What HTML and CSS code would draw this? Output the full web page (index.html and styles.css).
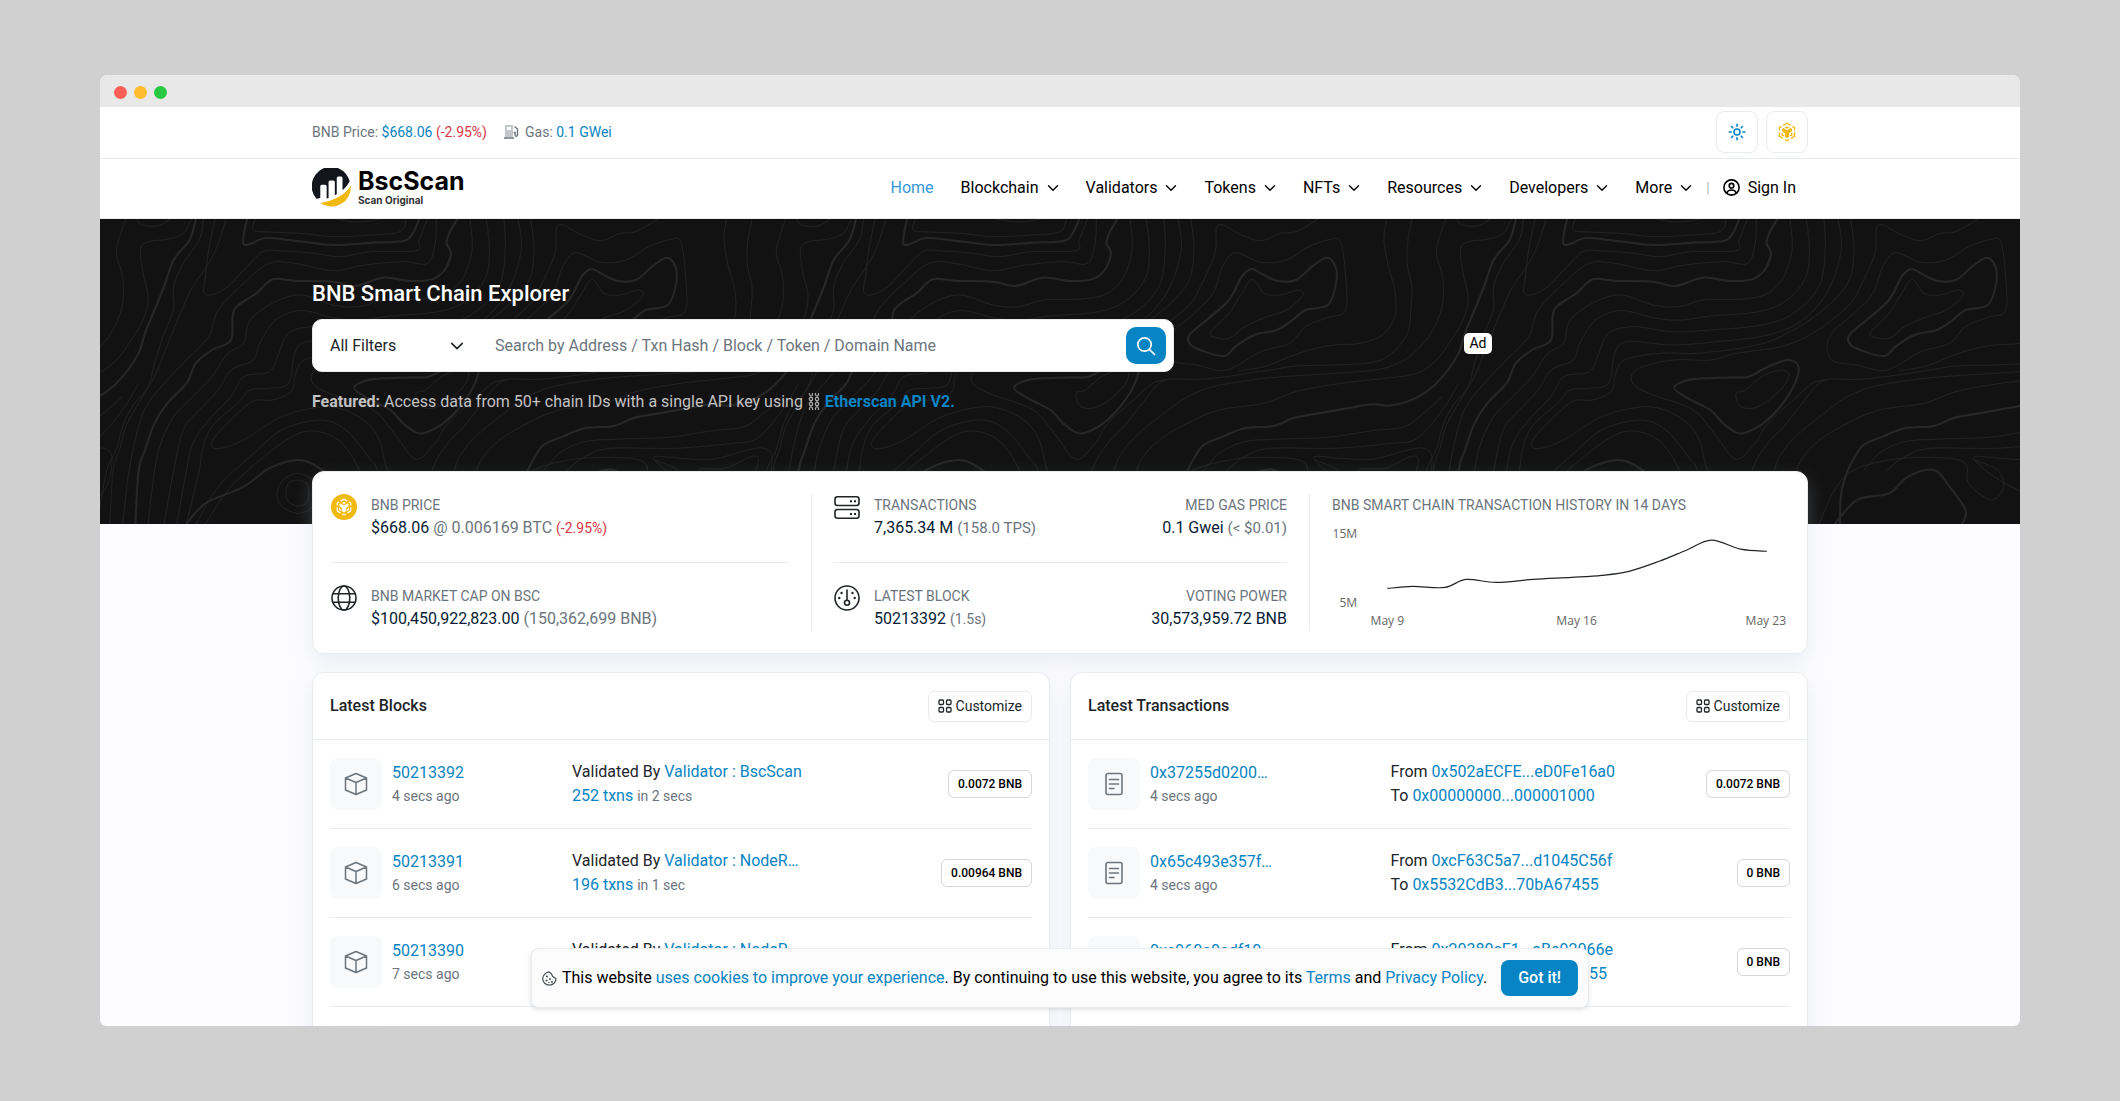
FILE: index.html
```html
<!DOCTYPE html>
<html lang="en">
<head>
  <meta charset="UTF-8" />
  <meta name="viewport" content="width=device-width, initial-scale=1.0" />
  <title>BNB Smart Chain Explorer</title>
  <link rel="stylesheet" href="styles.css">
</head>
<body>
  <svg class="sprite" aria-hidden="true">
    <symbol id="chevron" viewBox="0 0 12 12"><path d="M1.5 3.700 6 8.200l4.500-4.500" fill="none" stroke="currentColor" stroke-width="1.4" stroke-linecap="round" stroke-linejoin="round"/></symbol>
    <symbol id="bnb" viewBox="0 0 24 24">
      <g fill="none" stroke="currentColor" stroke-width="1.7">
        <path d="M7.500 4.100 12 1.500l4.500 2.600M18.500 5.300l2.500 1.400v3.300M21 12.300v5l-4.300 2.500M14.500 21 12 22.500 9.500 21M7.300 19.800 3 17.300v-5M3 10V6.700l2.500-1.400"/>
        <path d="M6.300 13.300v2.300l2 1.200M17.700 13.300v2.300l-2 1.200"/>
      </g>
      <path fill="currentColor" d="M9.300 6.500 12 5l2.700 1.500L12 8.100zM6 8.300l1.700-1L12 9.900l4.300-2.600 1.700 1v2.800l-3.400 2.100v4.500L12 19.300l-2.600-1.600v-4.500L6 11.100z"/>
    </symbol>
    <symbol id="grid" viewBox="0 0 14 14"><g fill="none" stroke="currentColor" stroke-width="1.3"><rect x="1" y="1" width="4.500" height="4.500" rx="1"/><rect x="8.500" y="1" width="4.500" height="4.500" rx="1"/><rect x="1" y="8.500" width="4.500" height="4.500" rx="1"/><rect x="8.500" y="8.500" width="4.500" height="4.500" rx="1"/></g></symbol>
    <symbol id="cube" viewBox="0 0 24 24"><path d="M12 1.500 22.500 6v12L12 22.500 1.500 18V6zM1.500 6 12 10.500 22.500 6M12 10.500v12" fill="none" stroke="currentColor" stroke-width="1.5" stroke-linejoin="round"/></symbol>
    <symbol id="doc" viewBox="0 0 24 24"><path d="M6 1.500h12a2 2 0 0 1 2 2v17a2 2 0 0 1-2 2H6a2 2 0 0 1-2-2v-17a2 2 0 0 1 2-2zM7.500 7.500h9M7.500 12h9M7.500 16.500h4.500" fill="none" stroke="currentColor" stroke-width="1.6" stroke-linecap="round"/></symbol>
  </svg>

  <div class="window">
    <div class="titlebar"><span class="dot red"></span><span class="dot yellow"></span><span class="dot green"></span></div>

    <div class="topbar">
      <div class="container topbar-inner">
        <div class="ticker">
          <span>BNB Price: <a href="#">$668.06</a> <span class="down">(-2.95%)</span></span>
          <span class="gas">
            <svg width="15" height="15" viewBox="0 0 15 15"><rect x="1" y="1" width="8" height="12" fill="#c3c7cb"/><rect x="3" y="3" width="4" height="3" fill="#fff"/><path d="M0 14h10M10.500 2.500 13.500 5v6a1.200 1.200 0 0 1-2.400 0V8.500H9.500" fill="none" stroke="#6c757d" stroke-width="1.4"/></svg>
            <span>Gas: <a href="#">0.1 GWei</a></span>
          </span>
        </div>
        <div class="tools">
          <button class="tool sun" type="button" aria-label="Theme"><svg width="18" height="18" viewBox="0 0 18 18" fill="none" stroke="currentColor" stroke-width="1.6" stroke-linecap="round"><circle cx="9" cy="9" r="3"/><path d="M9 1.200v2M9 14.800v2M1.200 9h2M14.800 9h2M3.500 3.500l1.300 1.300M13.200 13.200l1.300 1.300M3.500 14.500l1.300-1.300M13.200 4.800l1.300-1.300"/></svg></button>
          <button class="tool chain" type="button" aria-label="Network"><svg width="20" height="20"><use href="#bnb"/></svg></button>
        </div>
      </div>
    </div>

    <header class="header">
      <div class="container header-inner">
        <a class="logo" href="#">
          <svg width="39" height="39" viewBox="0 0 40 40">
            <path d="M4.600 31.600A19.800 19.800 0 1 1 38.700 13.700C36 18.500 33.800 20.700 31.300 22.700V10.300a2 2 0 0 0-2-1.500h-2.400a2 2 0 0 0-1.500 1.500v16.500l-2 1.100V14.200a2 2 0 0 0-2-1.500H19a2 2 0 0 0-2 1.500v16.500l-2 .6V18.600a2 2 0 0 0-2-1.500h-2.500a2 2 0 0 0-2 1.500v12c-1.500.6-2.700.9-3.900 1z" fill="#12161c"/>
            <path d="M8.500 36C22 34 34 27.500 39.800 18.300A19.900 19.900 0 0 1 8.500 36z" fill="#f0b90b"/>
          </svg>
          <span class="logo-text"><b>BscScan</b><small>Scan Original</small></span>
        </a>
        <nav class="nav">
          <a class="active" href="#">Home</a>
          <a href="#">Blockchain <svg width="12" height="12"><use href="#chevron"/></svg></a>
          <a href="#">Validators <svg width="12" height="12"><use href="#chevron"/></svg></a>
          <a href="#">Tokens <svg width="12" height="12"><use href="#chevron"/></svg></a>
          <a href="#">NFTs <svg width="12" height="12"><use href="#chevron"/></svg></a>
          <a href="#">Resources <svg width="12" height="12"><use href="#chevron"/></svg></a>
          <a href="#">Developers <svg width="12" height="12"><use href="#chevron"/></svg></a>
          <a href="#">More <svg width="12" height="12"><use href="#chevron"/></svg></a>
          <span class="bar">|</span>
          <a class="signin" href="#"><svg width="17" height="17" viewBox="0 0 17 17" fill="none" stroke="currentColor" stroke-width="1.6"><circle cx="8.500" cy="8.500" r="7.600"/><circle cx="8.500" cy="6.700" r="2.300"/><path d="M3.800 14c.6-2 2.200-3 4.700-3s4.100 1 4.700 3"/></svg> Sign In</a>
        </nav>
      </div>
    </header>

    <section class="hero">
      <svg class="topo" width="100%" height="100%" aria-hidden="true">
        <defs>
          <pattern id="tile" x="300" y="0" width="660" height="305" patternUnits="userSpaceOnUse">
            <g id="contours"></g>
            <use href="#contours" x="-660"/>
            <use href="#contours" x="660"/>
          </pattern>
        </defs>
        <rect width="100%" height="100%" fill="url(#tile)"/>
      </svg>
      <div class="container hero-inner">
        <div class="hero-main">
          <h1>BNB Smart Chain Explorer</h1>
          <form class="search">
            <span class="filter">
              <select aria-label="Filter"><option>All Filters</option></select>
              <svg width="14" height="14"><use href="#chevron"/></svg>
            </span>
            <input type="text" aria-label="Search" placeholder="Search by Address / Txn Hash / Block / Token / Domain Name">
            <button class="search-btn" type="button" aria-label="Search"><svg width="20" height="20" viewBox="0 0 20 20" fill="none" stroke="#fff" stroke-width="1.7" stroke-linecap="round"><circle cx="8.500" cy="8.500" r="6.700"/><path d="m13.500 13.500 5 5"/></svg></button>
          </form>
          <p class="featured"><b>Featured:</b> Access data from 50+ chain IDs with a single API key using <svg width="12" height="17" viewBox="0 0 12 17" fill="none" stroke="#aaa" stroke-width="1.200"><path d="M1.500 0v1.500a1.500 1.500 0 0 0 3 0V0M7.500 0v1.500a1.500 1.500 0 0 0 3 0V0M1.500 17v-1.500a1.500 1.500 0 0 1 3 0V17M7.500 17v-1.500a1.500 1.500 0 0 1 3 0V17M3 2.500v2M9 2.500v2M3 7.500v2M9 7.500v2M3 12.500v2M9 12.500v2"/><circle cx="3" cy="6" r="1.700"/><circle cx="9" cy="6" r="1.700"/><circle cx="3" cy="11" r="1.700"/><circle cx="9" cy="11" r="1.700"/></svg> <a href="#">Etherscan API V2.</a></p>
        </div>
        <div class="hero-side"><span class="ad">Ad</span></div>
      </div>
    </section>

    <main class="container main">
      <section class="card stats">
        <div class="stats-col">
          <div class="stat">
            <svg class="stat-icon" width="26" height="26" viewBox="0 0 26 26"><circle cx="13" cy="13" r="13" fill="#f0b90b"/><use href="#bnb" x="4" y="4" width="18" height="18" color="#fff"/></svg>
            <div><h2>BNB Price</h2><p>$668.06 <span class="muted">@ 0.006169 BTC</span> <span class="down small">(-2.95%)</span></p></div>
          </div>
          <div class="stat">
            <svg class="stat-icon" width="26" height="26" viewBox="0 0 26 26" fill="none" stroke="#212529" stroke-width="1.600"><circle cx="13" cy="13" r="12"/><ellipse cx="13" cy="13" rx="5.800" ry="12"/><path d="M2 8.800h22M2 17.200h22"/></svg>
            <div><h2>BNB Market Cap on BSC</h2><p>$100,450,922,823.00 <span class="muted">(150,362,699 BNB)</span></p></div>
          </div>
        </div>
        <div class="stats-col">
          <div class="stat">
            <svg class="stat-icon" width="26" height="26" viewBox="0 0 26 26" fill="none" stroke="#212529" stroke-width="1.600"><rect x="1" y="2.800" width="24" height="8.700" rx="2.500"/><rect x="1" y="15.500" width="24" height="8.700" rx="2.500"/><path d="M16 7.200h2M20 7.200h2M16 19.900h2M20 19.900h2" stroke-width="2"/></svg>
            <div><h2>Transactions</h2><p>7,365.34 M <span class="muted mid">(158.0 TPS)</span></p></div>
            <div class="right"><h2>Med Gas Price</h2><p>0.1 Gwei <span class="muted mid">(&lt; $0.01)</span></p></div>
          </div>
          <div class="stat">
            <svg class="stat-icon" width="26" height="26" viewBox="0 0 26 26" fill="none" stroke="#212529" stroke-width="1.600"><circle cx="13" cy="13" r="12"/><path d="M13 4.500v10.800"/><circle cx="13" cy="17.800" r="2.500"/><g fill="#212529" stroke="none"><circle cx="7.500" cy="8" r="1.200"/><circle cx="18.500" cy="8" r="1.200"/><circle cx="5.300" cy="13" r="1.200"/><circle cx="20.700" cy="13" r="1.200"/></g></svg>
            <div><h2>Latest Block</h2><p>50213392 <span class="muted small">(1.5s)</span></p></div>
            <div class="right"><h2>Voting Power</h2><p>30,573,959.72 BNB</p></div>
          </div>
        </div>
        <div class="stats-col history">
          <h2>BNB Smart Chain Transaction History in 14 Days</h2>
          <svg class="chart" viewBox="0 0 454 112">
            <path id="line" fill="none" stroke="#212529" stroke-width="1.200"/>
            <text x="25" y="22" text-anchor="end">15M</text>
            <text x="25" y="90" text-anchor="end">5M</text>
            <text x="55" y="108" text-anchor="middle">May 9</text>
            <text x="243" y="108" text-anchor="middle">May 16</text>
            <text x="431" y="108" text-anchor="middle">May 23</text>
          </svg>
        </div>
      </section>

      <div class="lists">
        <section class="card list blocks">
          <div class="list-head"><h3>Latest Blocks</h3><button class="customize" type="button"><svg width="14" height="14"><use href="#grid"/></svg> Customize</button></div>
          <div class="row">
            <div class="first"><span class="thumb"><svg width="24" height="24"><use href="#cube"/></svg></span><div><a href="#">50213392</a><small>4 secs ago</small></div></div>
            <div class="second">Validated By <a href="#">Validator : BscScan</a><br><a href="#">252 txns</a> <small>in 2 secs</small></div>
            <span class="badge">0.0072 BNB</span>
          </div>
          <div class="row">
            <div class="first"><span class="thumb"><svg width="24" height="24"><use href="#cube"/></svg></span><div><a href="#">50213391</a><small>6 secs ago</small></div></div>
            <div class="second">Validated By <a href="#">Validator : NodeR…</a><br><a href="#">196 txns</a> <small>in 1 sec</small></div>
            <span class="badge">0.00964 BNB</span>
          </div>
          <div class="row">
            <div class="first"><span class="thumb"><svg width="24" height="24"><use href="#cube"/></svg></span><div><a href="#">50213390</a><small>7 secs ago</small></div></div>
            <div class="second">Validated By <a href="#">Validator : NodeR…</a><br>&nbsp;</div>
          </div>
          <div class="row"><span class="thumb"></span></div>
        </section>

        <section class="card list txns">
          <div class="list-head"><h3>Latest Transactions</h3><button class="customize" type="button"><svg width="14" height="14"><use href="#grid"/></svg> Customize</button></div>
          <div class="row">
            <div class="first"><span class="thumb"><svg width="24" height="24"><use href="#doc"/></svg></span><div><a href="#">0x37255d0200…</a><small>4 secs ago</small></div></div>
            <div class="second">From <a href="#">0x502aECFE...eD0Fe16a0</a><br>To <a href="#">0x00000000...000001000</a></div>
            <span class="badge">0.0072 BNB</span>
          </div>
          <div class="row">
            <div class="first"><span class="thumb"><svg width="24" height="24"><use href="#doc"/></svg></span><div><a href="#">0x65c493e357f…</a><small>4 secs ago</small></div></div>
            <div class="second">From <a href="#">0xcF63C5a7...d1045C56f</a><br>To <a href="#">0x5532CdB3...70bA67455</a></div>
            <span class="badge">0 BNB</span>
          </div>
          <div class="row">
            <div class="first"><span class="thumb"><svg width="24" height="24"><use href="#doc"/></svg></span><div><a href="#">0xe960a0adf10…</a><small>4 secs ago</small></div></div>
            <div class="second">From <a href="#">0x20380cF1...aBe92066e</a><br>To <a href="#">0xCD3BCDB3...D0bAD6955</a></div>
            <span class="badge">0 BNB</span>
          </div>
          <div class="row"><span class="thumb"></span></div>
        </section>
      </div>
    </main>

    <div class="cookies">
      <svg width="15" height="15" viewBox="0 0 15 15" fill="none" stroke="#495057" stroke-width="1.200"><path d="M7 .8 9.500 3l1.300 2.500L14 7.500a6.500 6.500 0 0 1-6.500 6.700A6.600 6.600 0 0 1 .8 7.500C.8 4.500 3.500 1.500 7 .8z"/><g fill="#495057" stroke="none"><circle cx="5" cy="5.500" r="1"/><circle cx="4.500" cy="9.500" r="1"/><circle cx="8" cy="8" r="1"/><circle cx="10" cy="11" r="1"/><circle cx="7" cy="11.500" r=".7"/></g></svg>
      <p>This website <a href="#">uses cookies to improve your experience</a>. By continuing to use this website, you agree to its <a href="#">Terms</a> and <a href="#">Privacy Policy</a>.</p>
      <button type="button">Got it!</button>
    </div>
  </div>
  <script src="script.js"></script>
</body>
</html>
```

FILE: styles.css
```css
:root {
  --link: #0784c3;
  --text: #212529;
  --muted: #6c757d;
  --border: #e9ecef;
  --down: #dc3545;
}
* { box-sizing: border-box; margin: 0; padding: 0; }
body {
  height: 100vh;
  padding: 75px 100px;
  background: #d0d0d0;
  color: var(--text);
  font: 16px/24px Roboto, "Liberation Sans", sans-serif;
}
a { color: var(--link); text-decoration: none; }
button, input, select { font: inherit; color: inherit; }
button { cursor: pointer; }
.sprite { position: absolute; width: 0; height: 0; }
.muted { color: var(--muted); }
.down { color: var(--down); }
.small { font-size: 14px; }
.mid { font-size: 15px; }

.window {
  position: relative;
  height: 100%;
  overflow: hidden;
  border-radius: 8px 8px 6px 6px;
  background: #fcfcff;
}
.container {
  width: 100%;
  max-width: 1496px;
  margin: 0 auto;
}
.titlebar {
  display: flex;
  align-items: center;
  gap: 7px;
  height: 32px;
  padding: 2px 14px 0;
  background: #e8e8e8;
}
.dot { width: 13px; height: 13px; border-radius: 50%; }
.red { background: #ff5f57; }
.yellow { background: #febc2e; }
.green { background: #28c840; }

.topbar { background: #fff; border-bottom: 1px solid var(--border); }
.topbar-inner {
  display: flex;
  align-items: center;
  justify-content: space-between;
  height: 51px;
  padding-bottom: 2px;
}
.ticker {
  display: flex;
  gap: 17px;
  font-size: 14px;
  color: var(--muted);
}
.gas { display: flex; align-items: center; gap: 6px; }
.tools { display: flex; gap: 8px; }
.tool {
  display: flex;
  align-items: center;
  justify-content: center;
  width: 42px;
  height: 42px;
  border: 1px solid var(--border);
  border-radius: 8px;
  background: #fff;
}
.sun { color: var(--link); }
.chain { color: #f0b90b; }

.header { background: #fff; border-bottom: 1px solid var(--border); }
.header-inner {
  display: flex;
  align-items: center;
  justify-content: space-between;
  height: 59px;
  padding-bottom: 2px;
}
.logo { display: flex; align-items: center; gap: 7px; color: #000; }
.logo-text { display: flex; flex-direction: column; }
.logo-text b { font: 700 25px/25px Inter, sans-serif; }
.logo-text small { font: 700 10px/12px Inter, sans-serif; color: #333; }
.nav { display: flex; align-items: center; padding-right: 12px; }
.nav a {
  display: flex;
  align-items: center;
  gap: 8px;
  margin-left: 27px;
  color: #000;
}
.nav .active { color: #3498db; }
.nav .bar { margin-left: 14px; color: #adb5bd; font-size: 14px; }
.nav .signin { margin-left: 13px; }

.hero {
  position: relative;
  padding: 61px 0 110px;
  background: #121212;
}
.topo { position: absolute; inset: 0; }
.topo path {
  fill: none;
  stroke: #222;
  stroke-width: 1;
}
.topo .thick { stroke: #272727; stroke-width: 2; }
.hero-inner { position: relative; display: flex; }
.hero-main { flex: 0 0 862px; }
.hero-side {
  flex: 1;
  display: flex;
  align-items: center;
  justify-content: center;
  padding: 0 26px 8px 0;
}
.hero h1 {
  margin-bottom: 11px;
  color: #fff;
  font-size: 22px;
  font-weight: 500;
  line-height: 28px;
}
.search {
  display: flex;
  align-items: center;
  height: 53px;
  padding: 0 7px 0 17px;
  border: 1px solid var(--border);
  border-radius: 10px;
  background: #fff;
}
.filter { display: flex; align-items: center; width: 134px; }
.filter select {
  flex: 1;
  width: 100%;
  border: 0;
  background: none;
  appearance: none;
  outline: 0;
}
.search input {
  flex: 1;
  margin-left: 31px;
  border: 0;
  outline: 0;
  background: none;
}
.search input::placeholder { color: var(--muted); opacity: 1; }
.search-btn {
  display: flex;
  align-items: center;
  justify-content: center;
  width: 40px;
  height: 37px;
  border: 0;
  border-radius: 10px;
  background: var(--link);
}
.featured { margin-top: 18px; color: #c2c2c2; }
.featured svg { margin: 0 1px; vertical-align: -3px; }
.featured a { font-weight: 700; }
.ad {
  padding: 0 5px;
  border-radius: 5px;
  background: #fff;
  color: #000;
  font-size: 14px;
  line-height: 21px;
}

.main { position: relative; margin-top: -53px; }
.card {
  border: 1px solid var(--border);
  border-radius: 12px;
  background: #fff;
  box-shadow: 0 8px 19px rgba(189, 197, 209, .25);
}
.stats {
  display: grid;
  grid-template-columns: 1fr 1fr 1fr;
  padding: 22px 0;
}
.stats-col {
  padding: 0 22px;
  border-left: 1px solid var(--border);
}
.stats-col:first-child { padding-left: 18px; border-left: 0; }
.stats-col:last-child { padding-right: 18px; }
.stat { display: flex; gap: 14px; }
.stat + .stat {
  margin-top: 22px;
  padding-top: 22px;
  border-top: 1px solid var(--border);
}
.stats h2 {
  color: var(--muted);
  font-size: 14px;
  font-weight: 400;
  line-height: 22px;
  text-transform: uppercase;
}
.stat p { color: #081d35; }
.right { margin-left: auto; text-align: right; }
.chart { display: block; width: 100%; overflow: visible; }
.chart text { font: 12px "Open Sans", sans-serif; fill: #666; }

.lists {
  display: grid;
  grid-template-columns: 1fr 1fr;
  gap: 20px;
  margin-top: 18px;
}
.list-head {
  display: flex;
  align-items: center;
  justify-content: space-between;
  height: 67px;
  padding: 0 17px;
  border-bottom: 1px solid var(--border);
}
.list h3 { font-size: 16px; font-weight: 500; }
.customize {
  display: flex;
  align-items: center;
  gap: 4px;
  height: 31px;
  padding: 0 9px;
  border: 1px solid var(--border);
  border-radius: 6px;
  background: #fff;
  font-size: 14px;
}
.row {
  display: flex;
  align-items: center;
  height: 89px;
  margin: 0 17px;
  border-bottom: 1px solid var(--border);
}
.row small { color: var(--muted); font-size: 14px; }
.first {
  display: flex;
  align-items: center;
  gap: 10px;
  flex: 0 0 calc((100% + 24px) / 3);
}
.txns .first { flex-basis: calc((100% + 24px) * 5 / 12); }
.first small { display: block; line-height: 22px; }
.thumb {
  display: flex;
  align-items: center;
  justify-content: center;
  width: 52px;
  height: 52px;
  border-radius: 8px;
  background: #f8f9fa;
  color: var(--muted);
}
.second { flex: 1; }
.badge {
  padding: 0 9px;
  border: 1px solid #d3d7db;
  border-radius: 6px;
  color: #000;
  font-size: 12px;
  font-weight: 500;
  line-height: 26px;
}

.cookies {
  position: absolute;
  bottom: 18px;
  left: 50%;
  transform: translateX(-50%);
  display: flex;
  align-items: center;
  height: 60px;
  padding: 0 10px;
  border: 1px solid var(--border);
  border-radius: 8px;
  background: #fcfcfc;
  box-shadow: 0 2px 4px rgba(0, 0, 0, .1);
  color: #000;
  white-space: nowrap;
}
.cookies p { margin: 0 14px 0 5px; }
.cookies button {
  height: 36px;
  padding: 0 17px;
  border: 0;
  border-radius: 8px;
  background: var(--link);
  color: #fff;
  font-weight: 500;
}
```

FILE: script.js
```js
// Turns "x,y x,y ..." into a smooth path through every point
function smooth(str, sx, sy, closed) {
  const p = str.split(' ').map(s => s.split(',').map(Number)).map(([x, y]) => [x * sx, y * sy]);
  const n = p.length;
  const at = i => closed ? p[(i + n) % n] : p[Math.max(0, Math.min(n - 1, i))];
  let d = `M${p[0]}`;
  for (let i = 0; i < (closed ? n : n - 1); i++) {
    const [a, b, c, e] = [at(i - 1), at(i), at(i + 1), at(i + 2)];
    d += `C${b[0] + (c[0] - a[0]) / 6},${b[1] + (c[1] - a[1]) / 6} ${c[0] - (e[0] - b[0]) / 6},${c[1] - (e[1] - b[1]) / 6} ${c}`;
  }
  return d;
}

// prefix T = thick line, z = closed shape
const contours = [
  'T|715,0 705,63 680,123 665,203 650,273 635,343 625,403 600,473 575,518 545,548 515,560 490,556 450,568 400,585 365,598 335,621 290,628 255,653 225,678 210,718 200,756 190,823 188,915',
  '|708,0 695,43 670,61 640,68 628,93 632,163 640,233 632,303 610,373 590,423 560,463 510,478 440,493 370,518 320,553 250,573 200,613 150,673 120,756 110,915',
  '|605,0 597,43 590,103 600,173 600,253 590,313 570,373 540,423 500,451 430,463 350,473 300,483 240,503 200,533 170,573 130,633 100,693 85,756 70,915',
  '|552,0 545,73 545,143 552,203 550,273 545,343 520,403 490,430 430,438 370,441 330,453 260,473 215,481 170,481 150,503 125,563 100,623 75,673 50,756 35,915',
  '|512,0 508,63 515,143 525,213 525,293 505,348 470,373 430,378 395,391 360,413 320,443 280,455',
  'Tz|1335,150 1350,163 1375,185 1405,183 1430,143 1453,116 1467,143 1468,193 1455,258 1420,273 1400,303 1375,333 1340,348 1310,383 1295,410 1270,403 1240,378 1238,348 1265,303 1300,243 1320,173',
  'z|1337,181 1355,223 1380,228 1410,213 1415,233 1390,273 1360,293 1325,323 1300,358 1275,353 1272,338 1300,283 1320,223',
  'z|1310,101 1350,130 1390,123 1425,83 1460,61 1475,68 1482,153 1483,273 1455,295 1420,323 1395,373 1350,398 1310,443 1285,455 1250,438 1215,428 1203,393 1210,343 1245,283 1275,223 1290,143',
  '|1440,0 1405,38 1380,43 1350,65 1320,48 1283,18 1278,103 1255,203 1235,263 1180,343 1130,383 1060,403 1020,423 960,423 905,451 898,493 930,528 970,553 1000,583 1030,653 1060,721 1090,673 1110,613 1150,543 1180,493 1205,481',
  'Tz|963,506 990,481 1040,476 1080,473 1105,448 1140,423 1158,443 1150,503 1125,573 1095,623 1065,643 1040,613 1020,573 985,538',
  'z|1060,523 1075,513 1100,473 1130,453 1143,468 1130,513 1095,563 1068,563',
  'T|795,0 789,70 800,75 825,57 870,65 930,78 990,71 1040,66 1055,43 1065,0',
  '|808,0 805,33 830,39 880,43 930,53 990,48 1035,38 1045,0',
  '|935,0 970,9 1005,0',
  '|622,0 630,18 655,21 675,0',
  '|745,0 735,93 730,173 727,218 740,228 765,203 790,153 820,98 850,96 900,103 940,113 990,98 1060,95 1065,63 1078,0',
  '|727,0 720,63 695,133 680,203 680,273 665,343 650,433 640,503 615,563 600,623 590,693 575,756 560,915',
  '|762,0 750,73 735,133 710,203 695,263 680,333 665,403 650,473 625,553 605,623 595,693 585,756 580,915',
  '|1092,0 1090,73 1078,133 1040,128 980,138 930,155 870,133 830,133 790,193 750,273 735,353 700,423 670,483 640,553 625,623 610,756 600,915',
  'T|1125,0 1112,43 1108,73 1115,103 1105,153 1085,181 1050,186 1008,176 965,201 930,188 870,185 835,181 810,223 775,273 770,363 740,393 715,433 700,493 670,553 650,613 635,693 625,756 620,915',
  '|1145,0 1148,93 1135,173 1110,223 1070,240 1010,243 970,263 930,258 880,228 840,248 800,303 790,373 765,403 740,473 710,533 680,593 660,673 650,756 640,915',
  '|1170,0 1175,83 1170,173 1140,243 1095,278 1020,291 975,303 935,298 880,275 840,303 815,373 805,423 770,453 750,513 720,573 695,633 680,756 665,915',
  '|1198,0 1200,93 1190,203 1150,283 1100,318 1020,333 960,338 900,323 860,343 845,403 830,458 790,473 770,533 735,603 710,673 700,756 685,915',
  '|1220,0 1225,93 1205,213 1165,303 1110,348 1030,368 960,378 890,368 870,403 860,493 830,508 800,513 780,553 740,623 725,693 720,756 700,915',
  '|1240,0 1245,93 1235,193 1190,283 1130,353 1080,383 1000,403 940,403 885,423 870,473 865,518 835,543 805,546 775,593 745,653 740,683 755,688 790,663 850,593 920,563 970,593 1000,653 1015,756 1040,915',
  '|715,915 750,803 800,713 850,633 910,603 950,633 985,713 1000,756 1020,915',
  '|730,915 770,803 835,693 885,638 930,653 960,713 985,823 990,915',
  'T|700,915 730,853 790,803 830,748 875,723 905,743 930,793 935,915',
  'z|874,763 898,783 905,823 895,868 874,883 850,863 842,823 852,783',
  'z|874,783 888,793 892,823 888,853 874,861 860,848 856,823 860,793',
  '|260,756 290,713 330,688 430,688 520,673 560,658 600,573 625,493',
  '|225,756 250,703 290,668 350,660 420,655 490,635 540,623 570,583 600,533',
  'z|398,715 440,718 490,721 545,693 570,688 583,713 575,803 540,853 480,823 430,773',
  'z|470,753 510,748 550,713 562,723 550,793 520,813',
  'T|180,915 215,843 265,823 295,773 335,753 360,803 385,873 380,915',
  '|155,915 195,773 265,723 345,716 385,733 390,793 425,843 445,803 435,753 400,723'
];

// contour points are on a 1035 x 915 grid, one tile is 660 x 305
const group = document.getElementById('contours');
contours.forEach(item => {
  const [flags, points] = item.split('|');
  const path = document.createElementNS('http://www.w3.org/2000/svg', 'path');
  path.setAttribute('d', smooth(points, 660 / 1035, 1 / 3, flags.includes('z')));
  if (flags.includes('T')) path.setAttribute('class', 'thick');
  group.appendChild(path);
});

// daily transactions, May 9 - May 23
const daily = '55,72 80,70 112,71 133,63 163,66 200,63 238,61 268,59 295,55 325,45 352,34 377,24 406,33 432,35';
document.getElementById('line').setAttribute('d', smooth(daily, 1, 1, false));
```
